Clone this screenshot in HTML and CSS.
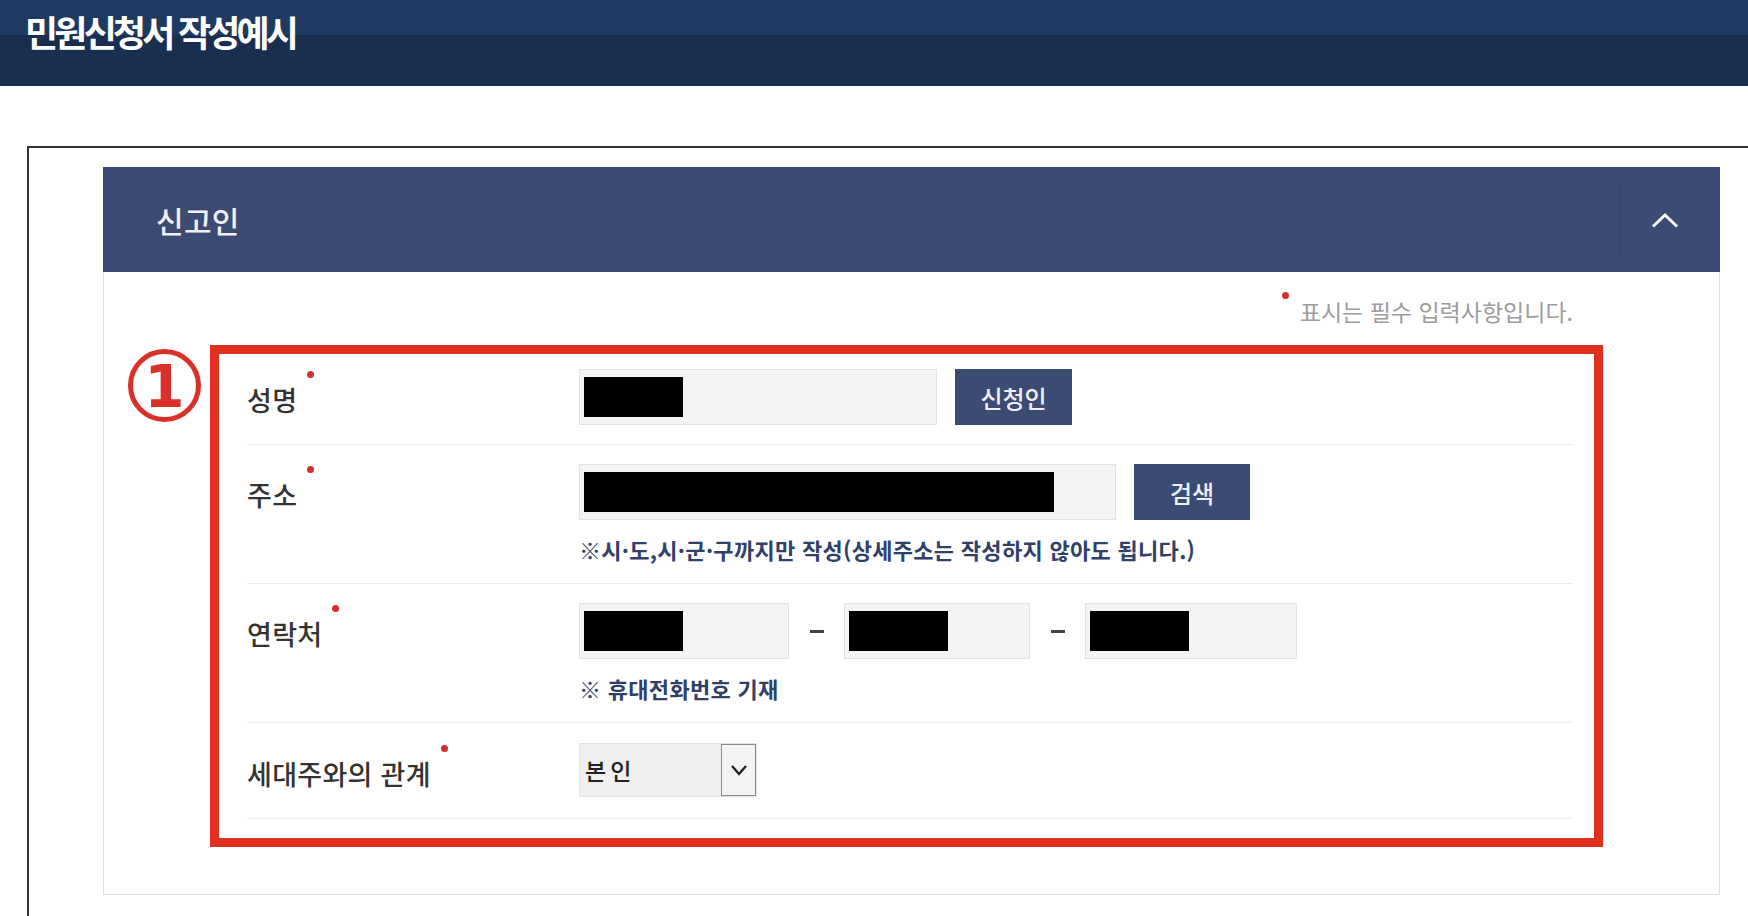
FILE: index.html
```html
<!DOCTYPE html>
<html lang="ko">
<head>
<meta charset="utf-8">
<title>민원신청서 작성예시</title>
<link rel="stylesheet" href="styles.css">
</head>
<body>
<header class="topbar">
  <h1 class="page-title">민원신청서 작성예시</h1>
</header>
<main class="frame">
  <section class="panel">
    <div class="panel-head">
      <h2 class="panel-title">신고인</h2>
      <button class="toggle" type="button" aria-label="접기">
        <svg width="28" height="16" viewBox="0 0 28 16"><path d="M2 14.5 L14 3 L26 14.5" fill="none" stroke="#ffffff" stroke-width="3"/></svg>
      </button>
    </div>
    <div class="panel-body">
      <p class="req-note"><span class="req-text">표시는 필수 입력사항입니다.</span></p>
      <div class="highlight">
        <div class="rows">
          <div class="form-row">
            <div class="label"><span class="req">성명</span></div>
            <div class="field">
              <div class="line">
                <div class="input w-name"><span class="mask m-short"></span></div>
                <button class="btn" type="button">신청인</button>
              </div>
            </div>
          </div>
          <div class="form-row">
            <div class="label"><span class="req">주소</span></div>
            <div class="field">
              <div class="line">
                <div class="input w-addr"><span class="mask m-addr"></span></div>
                <button class="btn btn-narrow" type="button">검색</button>
              </div>
              <p class="hint">※시·도,시·군·구까지만 작성(상세주소는 작성하지 않아도 됩니다.)</p>
            </div>
          </div>
          <div class="form-row">
            <div class="label"><span class="req">연락처</span></div>
            <div class="field">
              <div class="line phone">
                <div class="input w-tel1"><span class="mask m-short"></span></div>
                <span class="dash"></span>
                <div class="input w-tel2"><span class="mask m-short"></span></div>
                <span class="dash"></span>
                <div class="input w-tel3"><span class="mask m-short"></span></div>
              </div>
              <p class="hint">※ 휴대전화번호 기재</p>
            </div>
          </div>
          <div class="form-row">
            <div class="label"><span class="req">세대주와의 관계</span></div>
            <div class="field">
              <div class="select">
                <span class="select-text">본인</span>
                <span class="select-arrow">
                  <svg width="18" height="12" viewBox="0 0 18 12"><path d="M2 2 L9 10 L16 2" fill="none" stroke="#222" stroke-width="2.4"/></svg>
                </span>
              </div>
            </div>
          </div>
        </div>
        <span class="step-badge">1</span>
      </div>
    </div>
  </section>
</main>
</body>
</html>
```
FILE: styles.css
```css
html, body {
  margin: 0;
  padding: 0;
  background: #ffffff;
  overflow: hidden;
}
body {
  font-family: "Noto Sans CJK KR", "Noto Sans", sans-serif;
  color: #333;
}

.topbar {
  height: 86px;
  box-sizing: border-box;
  padding: 12px 0 0 25px;
  background: linear-gradient(#1e3a62 0, #1e3a62 35px, #1a2f50 35px, #1a2f50 100%);
}
.page-title {
  margin: 0;
  color: #ffffff;
  font-size: 36px;
  line-height: 38px;
  font-weight: 700;
  letter-spacing: -3.8px;
}

.frame {
  display: block;
  margin: 60px 0 0 27px;
  border-top: 2px solid #333;
  border-left: 2px solid #333;
  padding: 19px 0 40px 74px;
}

.panel {
  width: 1617px;
}
.panel-head {
  height: 105px;
  background: #3b4b74;
  display: flex;
  align-items: center;
  padding-left: 53px;
}
.panel-title {
  flex: 1;
  margin: 0;
  font-size: 30px;
  font-weight: 500;
  color: #eef0f5;
  letter-spacing: 0.3px;
}
.toggle {
  width: 90px;
  height: 70px;
  margin-right: 11px;
  padding: 0;
  border: 0;
  border-left: 1px solid #34446b;
  background: transparent;
  display: flex;
  align-items: center;
  justify-content: center;
}

.panel-body {
  border: 1px solid #dedede;
  border-top: 0;
  padding: 26px 116px 47px 106px;
}
.req-note {
  margin: 0 30px 21px 0;
  text-align: right;
  font-size: 23px;
  line-height: 26px;
  color: #9c9c9c;
}
.req-text {
  position: relative;
}
.req-text::before {
  content: "";
  position: absolute;
  left: -18px;
  top: -2px;
  width: 7px;
  height: 7px;
  border-radius: 50%;
  background: #d3302b;
}

.highlight {
  position: relative;
  border: 9px solid #e0301f;
  padding: 0 21px 19px 28px;
}
.form-row {
  display: flex;
  border-bottom: 1px solid #ececec;
  padding: 19px 0 21px;
}
.form-row:first-child {
  padding-top: 15px;
  padding-bottom: 19px;
}
.form-row:last-child {
  padding-top: 20px;
  padding-bottom: 19px;
}
.label {
  flex: none;
  width: 332px;
  height: 56px;
  display: flex;
  align-items: center;
  padding-top: 5px;
  box-sizing: border-box;
}
.req {
  position: relative;
  font-size: 27px;
  line-height: 30px;
  font-weight: 500;
  color: #333;
  letter-spacing: 0.3px;
}
.req::after {
  content: "";
  position: absolute;
  right: -17px;
  top: -14px;
  width: 7px;
  height: 7px;
  border-radius: 50%;
  background: #d3302b;
}

.field {
  display: flex;
  flex-direction: column;
}
.line {
  display: flex;
  align-items: center;
  gap: 18px;
}
.line.phone {
  gap: 0;
}
.input {
  height: 56px;
  box-sizing: border-box;
  background: #f4f4f4;
  border: 1px solid #e3e3e3;
  padding: 7px 4px;
}
.mask {
  display: block;
  height: 40px;
  background: #000;
}
.m-short { width: 99px; }
.m-addr { width: 470px; }
.w-name { width: 358px; }
.w-addr { width: 537px; }
.w-tel1 { width: 210px; }
.w-tel2 { width: 186px; }
.w-tel3 { width: 212px; }

.dash {
  width: 14px;
  height: 3px;
  background: #444;
  margin: 0 20px 0 21px;
}

.btn {
  width: 117px;
  height: 56px;
  padding: 0;
  border: 0;
  background: #3b4b74;
  color: #eef0f5;
  font-family: "Noto Sans CJK KR", "Noto Sans", sans-serif;
  font-size: 24px;
  font-weight: 500;
}
.btn-narrow {
  width: 116px;
}

.hint {
  margin: 16px 0 0;
  font-size: 22px;
  line-height: 26px;
  font-weight: 700;
  color: #2f4069;
  letter-spacing: 0.3px;
}

.select {
  width: 178px;
  height: 54px;
  box-sizing: border-box;
  display: flex;
  background: #efefef;
  border: 1px solid #e4e4e4;
}
.select-text {
  flex: 1;
  display: flex;
  align-items: center;
  padding-left: 5px;
  font-size: 23px;
  font-weight: 500;
  color: #222;
  letter-spacing: 4px;
}
.select-arrow {
  width: 35px;
  box-sizing: border-box;
  border: 1px solid #8a8a8a;
  background: #f3f3f3;
  display: flex;
  align-items: center;
  justify-content: center;
}

.step-badge {
  position: absolute;
  left: -91px;
  top: -5px;
  width: 73px;
  height: 73px;
  box-sizing: border-box;
  border: 5px solid #d9302a;
  border-radius: 50%;
  display: flex;
  align-items: center;
  justify-content: center;
  font-family: "DejaVu Sans", sans-serif;
  font-weight: 700;
  font-size: 58px;
  line-height: 1;
  padding-top: 2px;
  color: #d9302a;
}
```
